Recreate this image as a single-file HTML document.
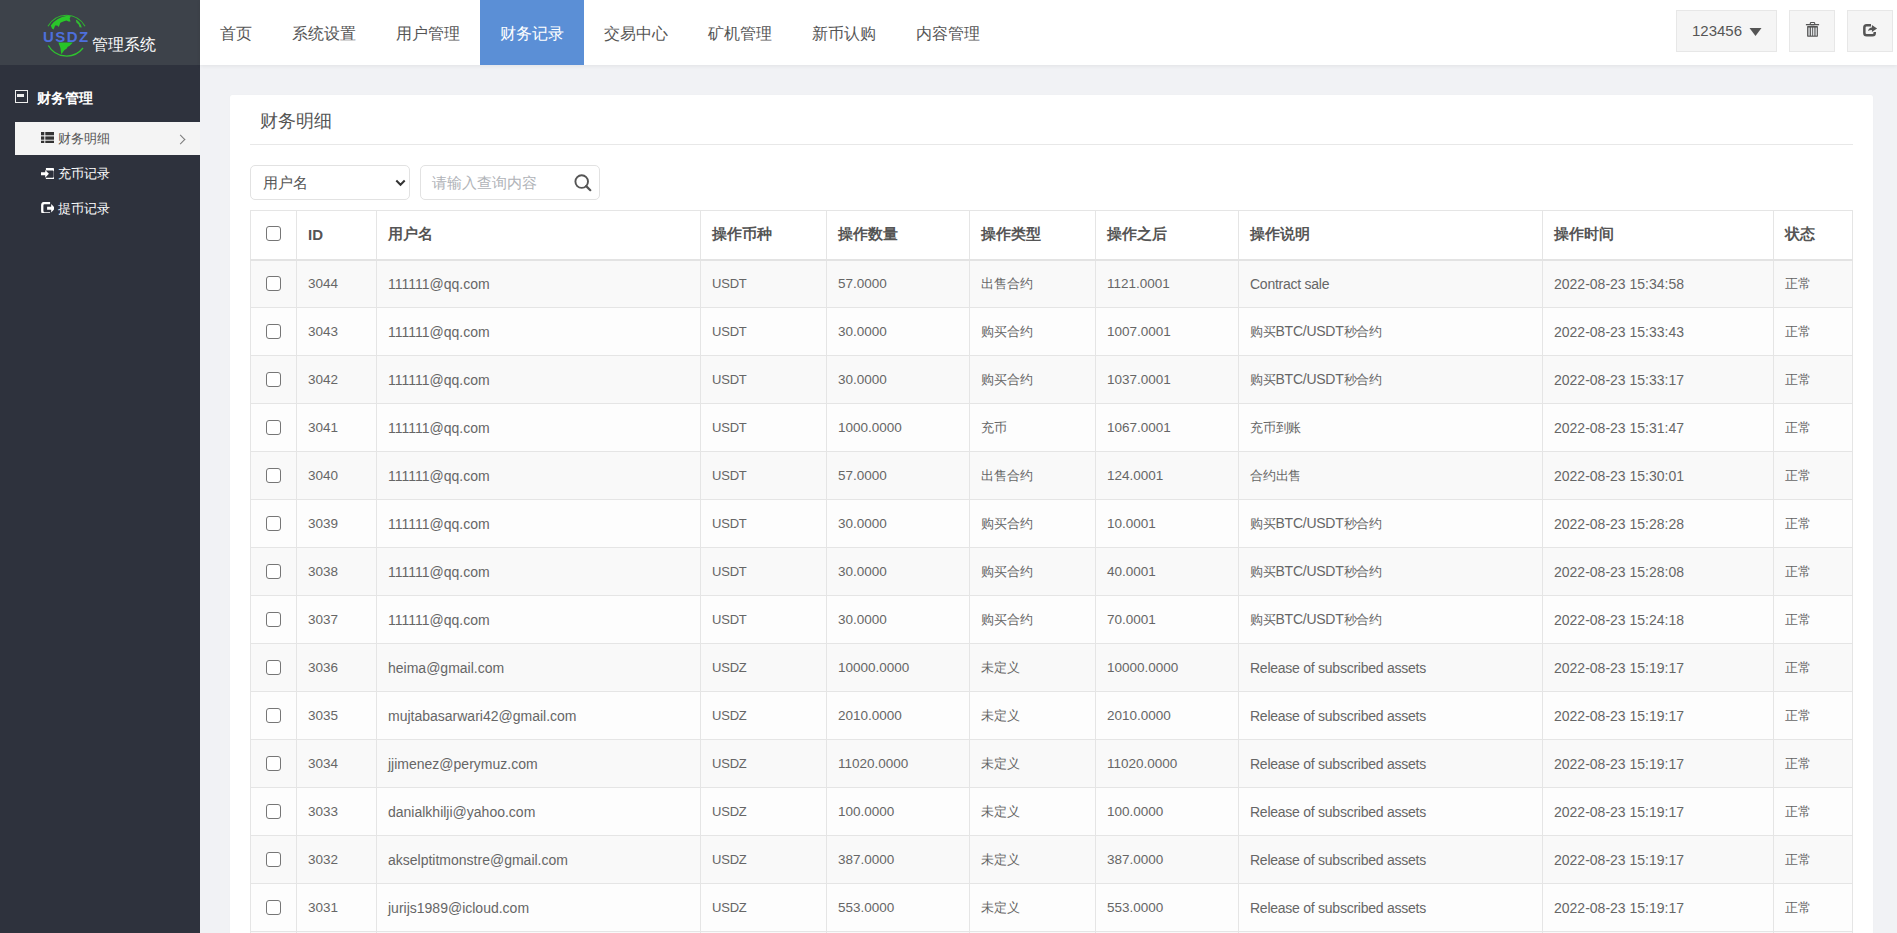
<!DOCTYPE html>
<html><head><meta charset="utf-8">
<style>
*{box-sizing:border-box;margin:0;padding:0}
html,body{width:1897px;height:933px;overflow:hidden}
body{font-family:"Liberation Sans",sans-serif;background:#f1f2f5;color:#555;position:relative}
#side{position:absolute;left:0;top:0;width:200px;height:933px;background:#2e323d}
#logo{position:absolute;left:0;top:0;width:200px;height:65px;background:#3d424a}
#logo .t{position:absolute;left:92px;top:35px;font-size:16px;color:#fff;line-height:20px;white-space:nowrap}
#menu-h{position:absolute;left:15px;top:89px;color:#fff;font-size:14px;font-weight:bold;white-space:nowrap}
#menu-h .ic{position:absolute;left:0;top:1px;width:12.5px;height:12.5px;border:1.8px solid #eee}
#menu-h .ic:after{content:"";position:absolute;left:1.2px;top:3.2px;width:6.5px;height:2.4px;background:#eee}
#menu-h span.tx{position:absolute;left:22px;top:0;line-height:18px}
.mi{position:absolute;left:15px;width:185px;height:33px;color:#fff;font-size:13px;line-height:33px}
.mi.act{background:#f4f4f4;color:#555}
.mi .tx{position:absolute;left:43px;top:0}
.mi .ic{position:absolute;left:26px;top:11px;width:13px;height:11px}
.mi .chev{position:absolute;left:161.5px;top:13.5px;width:7px;height:7px;border-right:1.4px solid #7a7a7a;border-top:1.4px solid #7a7a7a;transform:rotate(45deg)}

#top{position:absolute;left:200px;top:0;width:1697px;height:65px;background:#fff;box-shadow:0 1px 4px rgba(0,0,0,.07)}
.nav{position:absolute;top:0;height:65px;line-height:67px;font-size:16.2px;color:#555;padding:0 0 0 20px;width:104px;white-space:nowrap}
.nav.act{background:#5b8fd6;color:#fff}
.tbtn{position:absolute;top:10px;height:42px;background:#f5f5f5;border:1px solid #e7e7e7;color:#555}

#card{position:absolute;left:230px;top:95px;width:1643px;height:900px;background:#fff;border-radius:2px;box-shadow:0 0 1px rgba(0,0,0,.06)}
#title{position:absolute;left:30px;top:14px;font-size:18px;color:#555;line-height:24px}
#divider{position:absolute;left:20px;top:49px;width:1603px;height:1px;background:#e8e8e8}
#sel{position:absolute;left:20px;top:70px;width:160px;height:35px;border:1px solid #e2e2e2;border-radius:5px;font-size:15px;color:#555;line-height:33px;padding-left:12px}
#srch{position:absolute;left:190px;top:70px;width:180px;height:35px;border:1px solid #e2e2e2;border-radius:5px;font-size:15px;color:#b0b3b8;line-height:33px;padding-left:11px}

table{position:absolute;left:20px;top:115px;border-collapse:collapse;table-layout:fixed;width:1602px;font-size:14px;color:#555}
td,th{border:1px solid #e5e5e5;text-align:left;padding:0 0 0 11px;white-space:nowrap;overflow:hidden}
th{height:49px;font-weight:bold;font-size:15px;border-bottom:2px solid #e3e3e3}
td{height:48px;color:#666}
td:nth-child(2),td:nth-child(5),td:nth-child(7){font-size:13.5px}

td:nth-child(4){font-size:13px;letter-spacing:-.2px}
td:nth-child(8){letter-spacing:-.25px}
tbody tr:nth-child(odd) td{background:#f9f9f9}
.c{font-size:13px}
tbody tr:nth-child(even) td{background:#fdfdfd}
.cb{display:inline-block;width:15px;height:15px;border:1px solid #767676;border-radius:3px;background:#fff;vertical-align:middle;margin-left:4px}
</style></head><body>
<div id="side">
  <div id="logo">
    <svg width="100" height="65" style="position:absolute;left:0;top:0">
      <path d="M48 26.3 A21 21 0 0 1 85 26.3" fill="none" stroke="#2fb52f" stroke-width="1.2"/>
      <path d="M48.3 45.5 A21 21 0 0 0 83 48" fill="none" stroke="#2fc22f" stroke-width="1.3"/>
      <path d="M50.8 25.5 Q56.5 17.6 67 15.8 L70.8 16.3 L69.6 18.8 L70.6 21.6 L68.6 21.6 L66.4 20.6 L63.2 21.4 L60.4 22.8 L58.8 26.9 L57.2 25.4 L55.2 25.6 L53.6 29.6 L52 28.6 Z" fill="#2ac62a"/>
      <path d="M75.8 19.6 Q80.2 21.8 81.8 27.6 L79.6 27.2 L78.6 24.6 L76.4 22.4 Z" fill="#33bb33"/>
      <path d="M58.4 42.4 L72.9 42.4 L69.5 46 L67.8 46.8 L66.5 48.8 L64.5 50 L61.3 54.3 L60.4 48 Z" fill="#27c427"/>
      <text x="43" y="42.3" font-family="Liberation Sans" font-weight="bold" font-size="15" fill="#4d6fdc" textLength="45.2" lengthAdjust="spacing">USDZ</text>
    </svg>
    <div class="t">管理系统</div>
  </div>
  <div id="menu-h"><div class="ic"></div><span class="tx">财务管理</span></div>
  <div class="mi act" style="top:122px"><svg class="ic" width="14" height="13" style="left:26px;top:10px"><rect x="0" y="0" width="3.3" height="3.3" fill="#333"/><rect x="4.3" y="0" width="9" height="3.3" fill="#333"/><rect x="0" y="4.4" width="3.3" height="3.3" fill="#333"/><rect x="4.3" y="4.4" width="9" height="3.3" fill="#333"/><rect x="0" y="8.7" width="3.3" height="3.3" fill="#333"/><rect x="4.3" y="8.7" width="9" height="3.3" fill="#333"/></svg><span class="tx">财务明细</span><div class="chev"></div></div>
  <div class="mi" style="top:157px"><svg class="ic" width="16" height="14" style="left:26px;top:10.6px"><path d="M0 4.3 L4.2 4.3 L4.2 1.9 L7.9 5.8 L4.2 9.7 L4.2 7.3 L0 7.3 Z" fill="#fff"/><path d="M4.9 1.25 L11.6 1.25 Q13.85 1.25 13.85 3.5 L13.85 8.7 Q13.85 10.95 11.6 10.95 L4.9 10.95" fill="none" stroke="#fff" stroke-width="2.3"/></svg><span class="tx">充币记录</span></div>
  <div class="mi" style="top:192px"><svg class="ic" width="16" height="14" style="left:26px;top:10px"><path d="M9.1 1.1 L3.4 1.1 Q1.25 1.1 1.25 3.3 L1.25 9.1 Q1.25 11.3 3.4 11.3 L9.1 11.3" fill="none" stroke="#fff" stroke-width="2.3"/><path d="M6.1 4.7 L10.2 4.7 L10.2 2 L14.2 6.2 L10.2 10.4 L10.2 7.7 L6.1 7.7 Z" fill="#fff"/></svg><span class="tx">提币记录</span></div>
</div>
<div id="top">
  <div class="nav" style="left:0;width:72px">首页</div>
  <div class="nav" style="left:72px">系统设置</div>
  <div class="nav" style="left:176px">用户管理</div>
  <div class="nav act" style="left:280px">财务记录</div>
  <div class="nav" style="left:384px">交易中心</div>
  <div class="nav" style="left:488px">矿机管理</div>
  <div class="nav" style="left:592px">新币认购</div>
  <div class="nav" style="left:696px">内容管理</div>
  <div class="tbtn" style="left:1476px;width:101px"><span style="position:absolute;left:15px;top:11px;font-size:15px;line-height:18px;color:#555">123456</span>
    <svg width="14" height="10" style="position:absolute;left:72px;top:16px"><path d="M0.5 1 L12.5 1 L6.5 9 Z" fill="#555"/></svg></div>
  <div class="tbtn" style="left:1589px;width:46px">
    <svg width="16" height="18" style="position:absolute;left:15px;top:10px">
      <rect x="5.3" y="1.5" width="4.4" height="2.2" rx="0.8" fill="none" stroke="#555" stroke-width="1.1"/>
      <rect x="0.9" y="3" width="13.2" height="1.3" fill="#555"/>
      <rect x="2.1" y="5.1" width="10.8" height="10.6" rx="0.6" fill="#555"/>
      <rect x="3.4" y="6.6" width="1.3" height="8" fill="#e6e9ec"/>
      <rect x="5.9" y="6.6" width="1.3" height="8" fill="#e6e9ec"/>
      <rect x="8.1" y="6.6" width="1.3" height="8" fill="#e6e9ec"/>
      <rect x="10.5" y="6.6" width="1.3" height="8" fill="#e6e9ec"/>
    </svg></div>
  <div class="tbtn" style="left:1647px;width:46px">
    <svg width="18" height="18" style="position:absolute;left:15px;top:12px">
      <path d="M8 2.15 L3.6 2.15 Q1.35 2.15 1.35 4.4 L1.35 10 Q1.35 12.25 3.6 12.25 L9.5 12.25 Q11.75 12.25 11.75 10 L11.75 8.9" fill="none" stroke="#555" stroke-width="2.5"/>
      <path d="M14.1 5.4 L8.9 1.9 L8.9 4.5 Q5.8 4.7 5 8.1 Q6.7 7.1 8.9 7.1 L8.9 9 Z" fill="#555"/>
    </svg></div>
</div>
<div id="card">
  <div id="title">财务明细</div>
  <div id="divider"></div>
  <div id="sel">用户名<svg width="12" height="9" style="position:absolute;left:144px;top:13px"><path d="M1.3 1.5 L5.5 5.8 L9.7 1.5" fill="none" stroke="#333" stroke-width="2"/></svg></div>
  <div id="srch">请输入查询内容<svg width="20" height="20" style="position:absolute;left:152px;top:7px"><circle cx="8.7" cy="8.6" r="6.3" fill="none" stroke="#555" stroke-width="1.9"/><path d="M13.2 13.1 L17.3 17.2" stroke="#555" stroke-width="2.2" stroke-linecap="round"/></svg></div>
  <table>
    <colgroup><col style="width:46px"><col style="width:80px"><col style="width:324px"><col style="width:126px"><col style="width:143px"><col style="width:126px"><col style="width:143px"><col style="width:304px"><col style="width:231px"><col style="width:79px"></colgroup>
    <thead><tr><th><span class="cb" style="position:relative;top:-3px"></span></th><th>ID</th><th>用户名</th><th>操作币种</th><th>操作数量</th><th>操作类型</th><th>操作之后</th><th>操作说明</th><th>操作时间</th><th>状态</th></tr></thead>
    <tbody id="tb">
<tr><td><span class="cb" style="position:relative;top:-1px"></span></td><td>3044</td><td>111111@qq.com</td><td>USDT</td><td>57.0000</td><td><span class="c">出售合约</span></td><td>1121.0001</td><td>Contract sale</td><td>2022-08-23 15:34:58</td><td><span class="c">正常</span></td></tr>
<tr><td><span class="cb" style="position:relative;top:-1px"></span></td><td>3043</td><td>111111@qq.com</td><td>USDT</td><td>30.0000</td><td><span class="c">购买合约</span></td><td>1007.0001</td><td><span class="c">购买</span>BTC/USDT<span class="c">秒合约</span></td><td>2022-08-23 15:33:43</td><td><span class="c">正常</span></td></tr>
<tr><td><span class="cb" style="position:relative;top:-1px"></span></td><td>3042</td><td>111111@qq.com</td><td>USDT</td><td>30.0000</td><td><span class="c">购买合约</span></td><td>1037.0001</td><td><span class="c">购买</span>BTC/USDT<span class="c">秒合约</span></td><td>2022-08-23 15:33:17</td><td><span class="c">正常</span></td></tr>
<tr><td><span class="cb" style="position:relative;top:-1px"></span></td><td>3041</td><td>111111@qq.com</td><td>USDT</td><td>1000.0000</td><td><span class="c">充币</span></td><td>1067.0001</td><td><span class="c">充币到账</span></td><td>2022-08-23 15:31:47</td><td><span class="c">正常</span></td></tr>
<tr><td><span class="cb" style="position:relative;top:-1px"></span></td><td>3040</td><td>111111@qq.com</td><td>USDT</td><td>57.0000</td><td><span class="c">出售合约</span></td><td>124.0001</td><td><span class="c">合约出售</span></td><td>2022-08-23 15:30:01</td><td><span class="c">正常</span></td></tr>
<tr><td><span class="cb" style="position:relative;top:-1px"></span></td><td>3039</td><td>111111@qq.com</td><td>USDT</td><td>30.0000</td><td><span class="c">购买合约</span></td><td>10.0001</td><td><span class="c">购买</span>BTC/USDT<span class="c">秒合约</span></td><td>2022-08-23 15:28:28</td><td><span class="c">正常</span></td></tr>
<tr><td><span class="cb" style="position:relative;top:-1px"></span></td><td>3038</td><td>111111@qq.com</td><td>USDT</td><td>30.0000</td><td><span class="c">购买合约</span></td><td>40.0001</td><td><span class="c">购买</span>BTC/USDT<span class="c">秒合约</span></td><td>2022-08-23 15:28:08</td><td><span class="c">正常</span></td></tr>
<tr><td><span class="cb" style="position:relative;top:-1px"></span></td><td>3037</td><td>111111@qq.com</td><td>USDT</td><td>30.0000</td><td><span class="c">购买合约</span></td><td>70.0001</td><td><span class="c">购买</span>BTC/USDT<span class="c">秒合约</span></td><td>2022-08-23 15:24:18</td><td><span class="c">正常</span></td></tr>
<tr><td><span class="cb" style="position:relative;top:-1px"></span></td><td>3036</td><td>heima@gmail.com</td><td>USDZ</td><td>10000.0000</td><td><span class="c">未定义</span></td><td>10000.0000</td><td>Release of subscribed assets</td><td>2022-08-23 15:19:17</td><td><span class="c">正常</span></td></tr>
<tr><td><span class="cb" style="position:relative;top:-1px"></span></td><td>3035</td><td>mujtabasarwari42@gmail.com</td><td>USDZ</td><td>2010.0000</td><td><span class="c">未定义</span></td><td>2010.0000</td><td>Release of subscribed assets</td><td>2022-08-23 15:19:17</td><td><span class="c">正常</span></td></tr>
<tr><td><span class="cb" style="position:relative;top:-1px"></span></td><td>3034</td><td>jjimenez@perymuz.com</td><td>USDZ</td><td>11020.0000</td><td><span class="c">未定义</span></td><td>11020.0000</td><td>Release of subscribed assets</td><td>2022-08-23 15:19:17</td><td><span class="c">正常</span></td></tr>
<tr><td><span class="cb" style="position:relative;top:-1px"></span></td><td>3033</td><td>danialkhilji@yahoo.com</td><td>USDZ</td><td>100.0000</td><td><span class="c">未定义</span></td><td>100.0000</td><td>Release of subscribed assets</td><td>2022-08-23 15:19:17</td><td><span class="c">正常</span></td></tr>
<tr><td><span class="cb" style="position:relative;top:-1px"></span></td><td>3032</td><td>akselptitmonstre@gmail.com</td><td>USDZ</td><td>387.0000</td><td><span class="c">未定义</span></td><td>387.0000</td><td>Release of subscribed assets</td><td>2022-08-23 15:19:17</td><td><span class="c">正常</span></td></tr>
<tr><td><span class="cb" style="position:relative;top:-1px"></span></td><td>3031</td><td>jurijs1989@icloud.com</td><td>USDZ</td><td>553.0000</td><td><span class="c">未定义</span></td><td>553.0000</td><td>Release of subscribed assets</td><td>2022-08-23 15:19:17</td><td><span class="c">正常</span></td></tr>
<tr><td><span class="cb" style="position:relative;top:-1px"></span></td><td>3030</td><td>jurijs1989@icloud.com</td><td>USDZ</td><td>553.0000</td><td><span class="c">未定义</span></td><td>553.0000</td><td>Release of subscribed assets</td><td>2022-08-23 15:19:17</td><td><span class="c">正常</span></td></tr>
</tbody>
  </table>
</div>
</body></html>
